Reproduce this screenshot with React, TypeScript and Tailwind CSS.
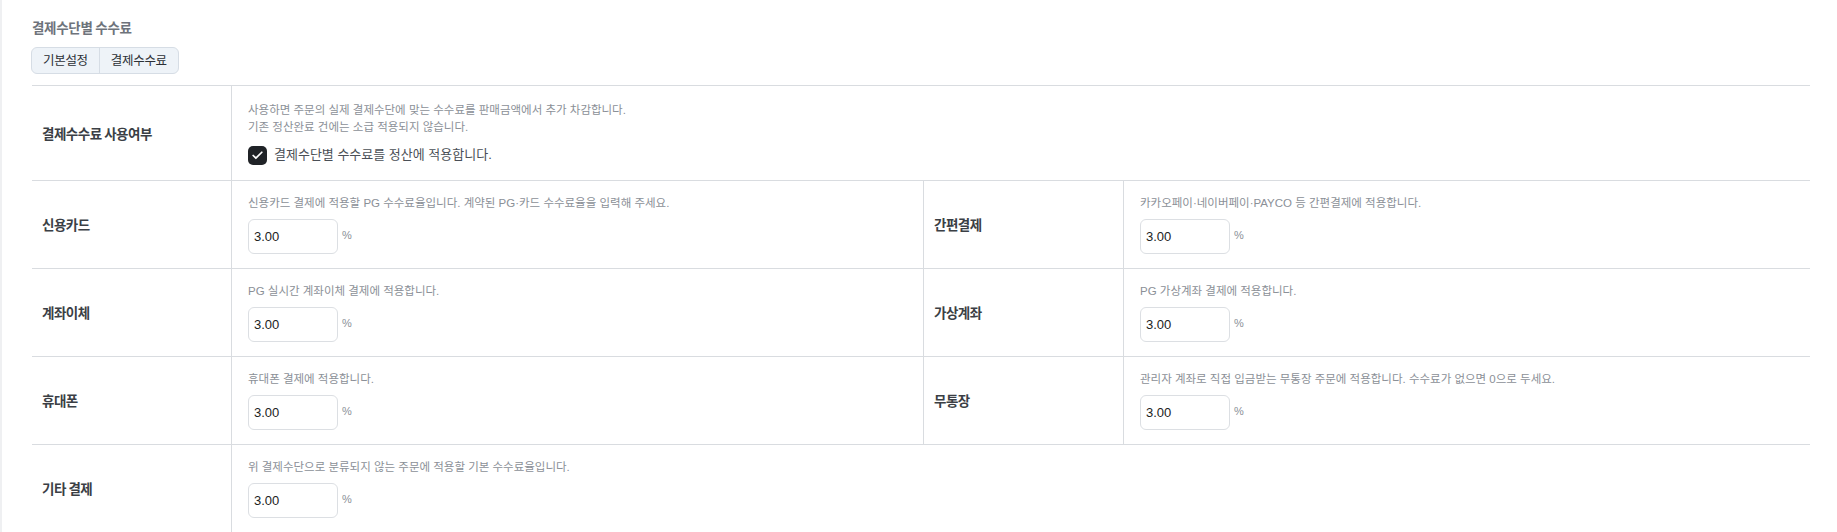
import React from 'react';
import { Check } from 'lucide-react';

type FeeProps = { desc: string };

const descCls =
  "font-['Liberation_Sans','Noto_Sans_CJK_KR',sans-serif] text-[11.5px] leading-[17px] text-[#8b9097]";

const FeeCell: React.FC<FeeProps> = ({ desc }) => (
  <div className="flex flex-col border-b border-[#d9dce0] px-4 pt-[14px] pb-[14px]">
    <p className={descCls}>{desc}</p>
    <div className="mt-[7px] flex items-center gap-[4px]">
      <input
        defaultValue="3.00"
        className="h-[35px] w-[90px] rounded-[6px] border border-[#dcdfe3] bg-white pl-[5px] font-['Liberation_Sans',Arial,sans-serif] text-[13px] text-[#222] outline-none"
      />
      <span className="mb-[3px] font-['Liberation_Sans',sans-serif] text-[11px] text-[#8b9097]">%</span>
    </div>
  </div>
);

const Label: React.FC<{ children: React.ReactNode }> = ({ children }) => (
  <div className="flex items-center border-r border-b border-[#d9dce0] pl-[10px] text-[13.5px] font-bold tracking-[-0.5px] text-[#3b3f45]">
    {children}
  </div>
);

const App: React.FC = () => {
  return (
    <div className="flex min-h-[532px] bg-white font-['Noto_Sans_CJK_KR',sans-serif]">
      <div className="w-[2px] shrink-0 bg-[#eff0f2]" />
      <div className="flex-1 pl-[30px] pr-[27px] pt-[17px]">
        <h2 className="text-[13.5px] font-bold leading-[20px] tracking-[-0.3px] text-[#6e737b]">
          결제수단별 수수료
        </h2>

        {/* 탭 */}
        <div className="mt-[10px] inline-flex h-[27px] overflow-hidden rounded-[6px] border border-[#d6dde5] bg-[#eef3f8] -ml-[1px]">
          <button className="border-r border-[#d6dde5] px-[11px] text-[12.5px] tracking-[-0.3px] text-[#2c3036]">
            기본설정
          </button>
          <button className="px-[11px] text-[12.5px] tracking-[-0.3px] text-[#2c3036]">
            결제수수료
          </button>
        </div>

        {/* 수수료 테이블 */}
        <div className="mt-[11px] grid grid-cols-[200px_692px_200px_1fr] border-t border-[#d9dce0]">
          <Label>결제수수료 사용여부</Label>
          <div className="col-span-3 flex flex-col border-b border-[#d9dce0] px-4 pt-[16px] pb-[15px]">
            <p className={descCls}>
              사용하면 주문의 실제 결제수단에 맞는 수수료를 판매금액에서 추가 차감합니다.
            </p>
            <p className={descCls}>기존 정산완료 건에는 소급 적용되지 않습니다.</p>
            <label className="mt-[9px] flex h-[20px] items-center gap-[7px]">
              <span className="flex h-[19px] w-[19px] items-center justify-center rounded-[5px] bg-[#202327]">
                <Check className="h-[13px] w-[13px] text-white" strokeWidth={3.2} />
              </span>
              <span className="font-['Liberation_Sans','Noto_Sans_CJK_KR',sans-serif] text-[13px] text-[#4a4f56]">
                결제수단별 수수료를 정산에 적용합니다.
              </span>
            </label>
          </div>

          <Label>신용카드</Label>
          <div className="border-r border-[#d9dce0]">
            <FeeCell desc="신용카드 결제에 적용할 PG 수수료율입니다. 계약된 PG·카드 수수료율을 입력해 주세요." />
          </div>
          <Label>간편결제</Label>
          <FeeCell desc="카카오페이·네이버페이·PAYCO 등 간편결제에 적용합니다." />

          <Label>계좌이체</Label>
          <div className="border-r border-[#d9dce0]">
            <FeeCell desc="PG 실시간 계좌이체 결제에 적용합니다." />
          </div>
          <Label>가상계좌</Label>
          <FeeCell desc="PG 가상계좌 결제에 적용합니다." />

          <Label>휴대폰</Label>
          <div className="border-r border-[#d9dce0]">
            <FeeCell desc="휴대폰 결제에 적용합니다." />
          </div>
          <Label>무통장</Label>
          <FeeCell desc="관리자 계좌로 직접 입금받는 무통장 주문에 적용합니다. 수수료가 없으면 0으로 두세요." />

          <Label>기타 결제</Label>
          <div className="col-span-3">
            <FeeCell desc="위 결제수단으로 분류되지 않는 주문에 적용할 기본 수수료율입니다." />
          </div>
        </div>
      </div>
    </div>
  );
};

export default App;
